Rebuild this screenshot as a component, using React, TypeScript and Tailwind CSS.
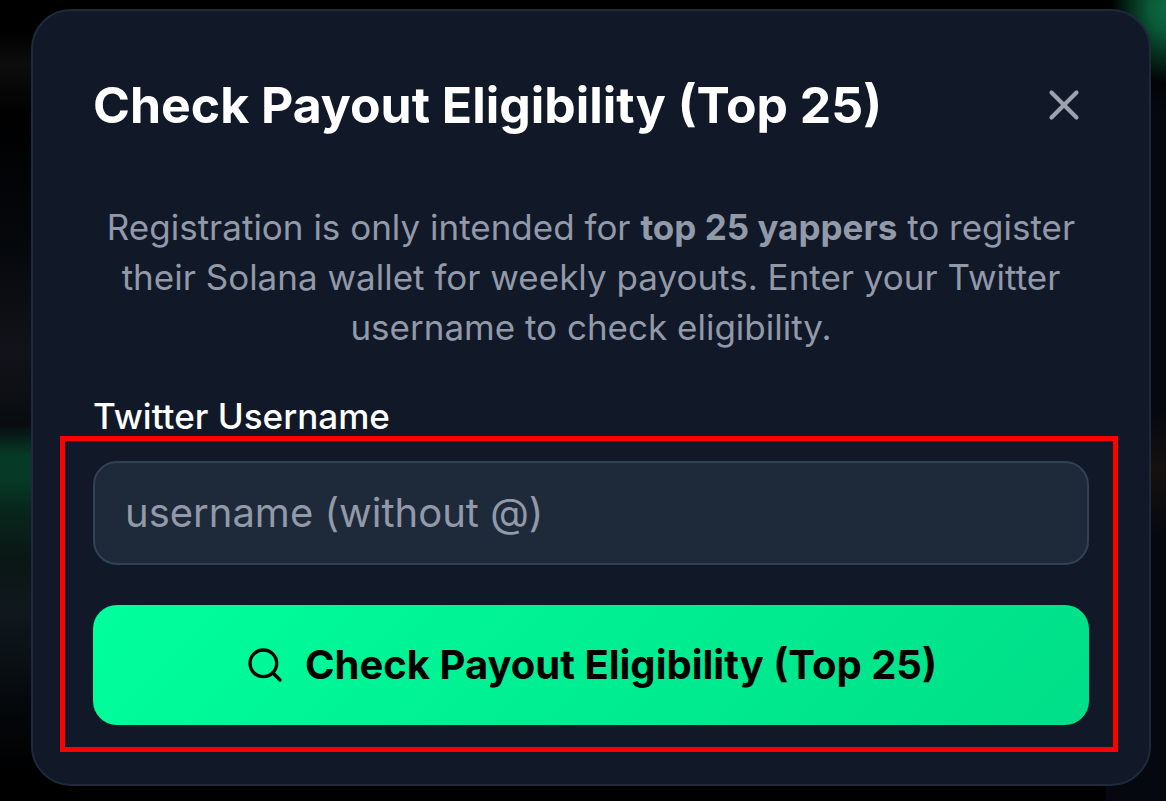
import { Search, X } from "lucide-react";

export default function App() {
  return (
    <div className="relative h-[801px] w-[1166px] overflow-hidden bg-black pl-[31px] pt-[9px] font-['Inter',sans-serif] [background:radial-gradient(55px_75px_at_1166px_8px,#0c6a42_0%,#0a5a38_30%,transparent_100%),linear-gradient(180deg,#000_0px,#000_30px,#0d0d0d_66px,#000_115px,#05080c_250px,#12131a_352px,#080c10_425px,#063a26_455px,#063a26_478px,#08261c_510px,#0a1614_560px,#10181d_612px,#05090d_700px,#000_770px)_left_top/70px_100%_no-repeat,linear-gradient(180deg,#000_60px,#05080f_110px,#05080f_410px,#15110f_470px,#05080f_540px,#05080f_801px)_right_top/60px_100%_no-repeat,#000]">
      <div className="flex h-[777px] w-[1120px] flex-col rounded-[40px] border-2 border-[#1e293b] bg-[#111827] px-[60px] pt-[62px]">
        <div className="flex h-[64px] items-center justify-between">
          <h2 className="text-[49.95px] font-bold leading-[64px] text-white">Check Payout Eligibility (Top 25)</h2>
          <X className="size-[50px] text-[#9ca3af]" strokeWidth={2} />
        </div>
        <p className="mt-[65px] px-[8px] text-center text-[35px] leading-[50px] text-[#9299a9]">
          Registration is only intended for <strong className="font-bold">top 25 yappers</strong> to register their Solana wallet for weekly payouts. Enter your Twitter username to check eligibility.
        </p>
        <label className="mt-[44px] block text-[35.1px] font-medium leading-[40px] text-white">Twitter Username</label>
        <div className="mt-[25px] flex h-[104px] items-center rounded-[24px] border-2 border-[#334155] bg-[#1e2a3a] px-[30px]">
          <span className="text-[40px] text-[#9299a9]">username (without @)</span>
        </div>
        <button className="mt-[40px] flex h-[120px] items-center justify-center gap-[20px] rounded-[24px] bg-linear-135 from-[#00ff9d] to-[#00de88] text-[40px] font-bold text-black">
          <Search className="size-[40px]" strokeWidth={2} />
          Check Payout Eligibility (Top 25)
        </button>
      </div>
      <div className="absolute left-[60px] top-[436px] h-[316px] w-[1058px] border-[5px] border-[#ff0000]" />
    </div>
  );
}
